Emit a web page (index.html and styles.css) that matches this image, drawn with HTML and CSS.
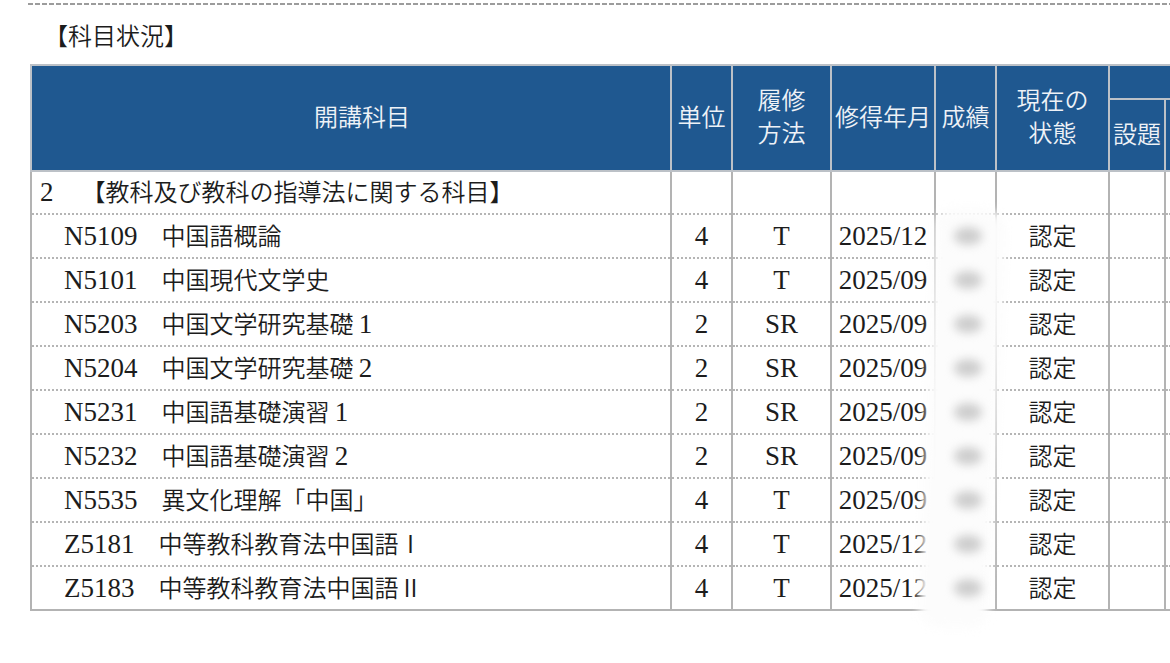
FILE: index.html
```html
<!DOCTYPE html>
<html lang="ja">
<head>
<meta charset="utf-8">
<title>科目状況</title>
<link rel="stylesheet" href="styles.css">
</head>
<body>
<div class="page">
  <div class="rule"></div>
  <h2 class="title">【科目状況】</h2>
  <div class="table-wrap">
    <table class="grid">
      <colgroup>
        <col class="c-name"><col class="c-unit"><col class="c-method"><col class="c-date"><col class="c-grade"><col class="c-state"><col class="c-topic"><col class="c-extra">
      </colgroup>
      <thead>
        <tr class="h1">
          <th rowspan="2" class="th-name">開講科目</th>
          <th rowspan="2">単位</th>
          <th rowspan="2">履修<br>方法</th>
          <th rowspan="2">修得年月</th>
          <th rowspan="2">成績</th>
          <th rowspan="2">現在の<br>状態</th>
          <th colspan="2"></th>
        </tr>
        <tr class="h2">
          <th>設題</th>
          <th></th>
        </tr>
      </thead>
      <tbody>
        <tr class="cat">
          <td class="name cat-name"><span class="lat cat-num">2</span>　【教科及び教科の指導法に関する科目】</td>
          <td></td><td></td><td></td><td></td><td></td><td></td><td></td>
        </tr>
        <tr>
          <td class="name"><span class="lat">N5109</span>　中国語概論</td>
          <td><span class="lat">4</span></td><td><span class="lat">T</span></td><td><span class="lat">2025/12</span></td><td></td><td>認定</td><td></td><td></td>
        </tr>
        <tr>
          <td class="name"><span class="lat">N5101</span>　中国現代文学史</td>
          <td><span class="lat">4</span></td><td><span class="lat">T</span></td><td><span class="lat">2025/09</span></td><td></td><td>認定</td><td></td><td></td>
        </tr>
        <tr>
          <td class="name"><span class="lat">N5203</span>　中国文学研究基礎<span class="fw">1</span></td>
          <td><span class="lat">2</span></td><td><span class="lat">SR</span></td><td><span class="lat">2025/09</span></td><td></td><td>認定</td><td></td><td></td>
        </tr>
        <tr>
          <td class="name"><span class="lat">N5204</span>　中国文学研究基礎<span class="fw">2</span></td>
          <td><span class="lat">2</span></td><td><span class="lat">SR</span></td><td><span class="lat">2025/09</span></td><td></td><td>認定</td><td></td><td></td>
        </tr>
        <tr>
          <td class="name"><span class="lat">N5231</span>　中国語基礎演習<span class="fw">1</span></td>
          <td><span class="lat">2</span></td><td><span class="lat">SR</span></td><td><span class="lat">2025/09</span></td><td></td><td>認定</td><td></td><td></td>
        </tr>
        <tr>
          <td class="name"><span class="lat">N5232</span>　中国語基礎演習<span class="fw">2</span></td>
          <td><span class="lat">2</span></td><td><span class="lat">SR</span></td><td><span class="lat">2025/09</span></td><td></td><td>認定</td><td></td><td></td>
        </tr>
        <tr>
          <td class="name"><span class="lat">N5535</span>　異文化理解「中国」</td>
          <td><span class="lat">4</span></td><td><span class="lat">T</span></td><td><span class="lat">2025/09</span></td><td></td><td>認定</td><td></td><td></td>
        </tr>
        <tr>
          <td class="name"><span class="lat">Z5181</span>　中等教科教育法中国語Ⅰ</td>
          <td><span class="lat">4</span></td><td><span class="lat">T</span></td><td><span class="lat">2025/12</span></td><td></td><td>認定</td><td></td><td></td>
        </tr>
        <tr>
          <td class="name"><span class="lat">Z5183</span>　中等教科教育法中国語Ⅱ</td>
          <td><span class="lat">4</span></td><td><span class="lat">T</span></td><td><span class="lat">2025/12</span></td><td></td><td>認定</td><td></td><td></td>
        </tr>
      </tbody>
    </table>
    <div class="smear" aria-hidden="true">
      <span class="dot"></span><span class="dot"></span><span class="dot"></span>
      <span class="dot"></span><span class="dot"></span><span class="dot"></span>
      <span class="dot"></span><span class="dot"></span><span class="dot"></span>
    </div>
  </div>
</div>
</body>
</html>
```

FILE: styles.css
```css
html, body {
  margin: 0;
  background: #ffffff;
}

body {
  width: 1170px;
  height: 663px;
  overflow: hidden;
  font-family: "Noto Sans CJK JP", sans-serif;
  color: #1c1c1c;
}

.page {
  padding: 3px 0 0 28px;
}

.rule {
  height: 2px;
  background: repeating-linear-gradient(to right, #9c9c9c 0 5px, transparent 5px 7px);
}

.title {
  margin: 18px 0 0 16px;
  font-size: 24px;
  font-weight: 350;
  line-height: 24px;
}

.table-wrap {
  position: relative;
  margin: 17px 0 0 2px;
  width: 1196px;
}

.grid {
  border-collapse: collapse;
  table-layout: fixed;
  width: 1196px;
  font-size: 24px;
  font-weight: 350;
}

.c-name { width: 640px; }
.c-unit { width: 61px; }
.c-method { width: 99px; }
.c-date { width: 104px; }
.c-grade { width: 61px; }
.c-state { width: 113px; }
.c-topic { width: 56px; }
.c-extra { width: 62px; }

.grid th {
  background: #1f5890;
  color: #eef2f7;
  border: 2px solid #bcc1c7;
  font-weight: 350;
  line-height: 33px;
  padding: 0 0 6px;
  text-align: center;
}

.grid th.th-name {
  padding-left: 22px;
}

.h1 { height: 34px; }
.h2 { height: 72px; }

.grid td {
  border-left: 2px solid #b3b3b3;
  border-right: 2px solid #b3b3b3;
  border-top: 2px dotted #b5b5b5;
  padding: 0 0 2px;
  height: 40px;
  line-height: 28px;
  text-align: center;
  white-space: nowrap;
}

.grid tbody tr:last-child td {
  border-bottom: 2px solid #b3b3b3;
}

.grid td.name {
  text-align: left;
  padding-left: 32px;
}

.grid td.cat-name {
  padding-left: 8px;
}

.cat td {
  height: 39px;
}

.lat {
  font-family: "Liberation Serif", serif;
  font-size: 27px;
  font-weight: 400;
}

.cat-num {
  margin-right: 16px;
}

.fw {
  display: inline-block;
  width: 24px;
  text-align: center;
  font-family: "Liberation Serif", serif;
  font-size: 27px;
  font-weight: 400;
}

.smear {
  position: absolute;
  left: 905px;
  top: 150px;
  width: 60px;
  display: flex;
  flex-direction: column;
  align-items: center;
}

.smear::before {
  content: "";
  position: absolute;
  left: -8px;
  right: -2px;
  top: -6px;
  bottom: -18px;
  background: #fcfcfc;
  border-radius: 20px;
  filter: blur(5px);
  transform: rotate(2.5deg);
}

.dot {
  position: relative;
  display: block;
  width: 28px;
  height: 18px;
  margin: 13px 0 13px 6px;
  border-radius: 50%;
  background: #cdcdcd;
  filter: blur(5px);
}
```
